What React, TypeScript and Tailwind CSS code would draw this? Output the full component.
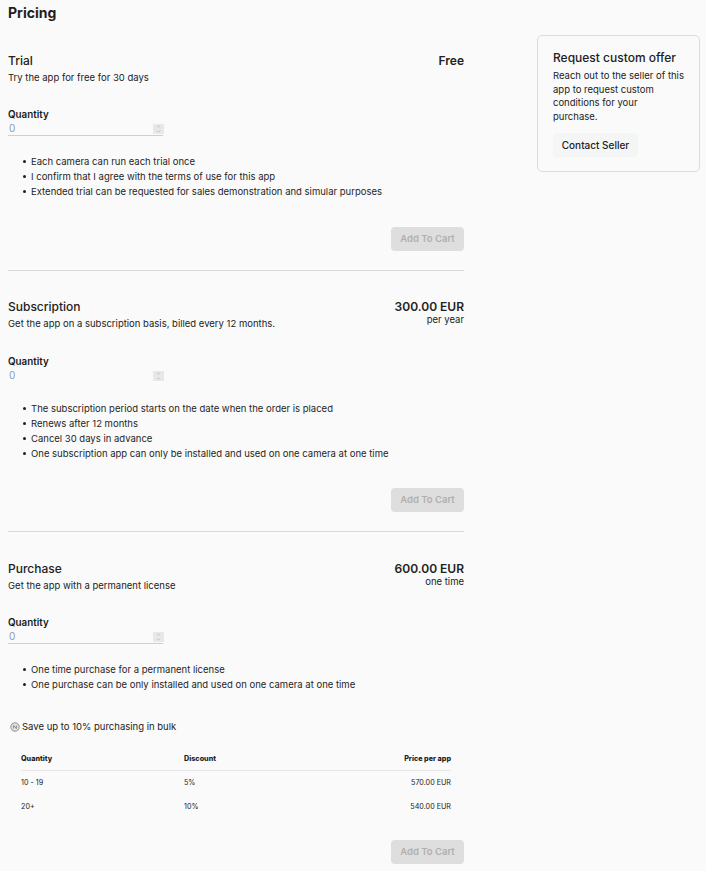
import { ChevronDown, ChevronUp } from 'lucide-react';

interface PlanProps {
  title: string;
  desc: string;
  price: string;
  per?: string;
}

function QuantityField({ noLine }: { noLine?: boolean }) {
  return (
    <div>
      <div className="text-[9.8px] leading-[14px] font-semibold text-[#1a1a1a]">Quantity</div>
      <div className={`w-[155px] h-[14px] relative ${noLine ? '' : 'border-b border-[#cfcfcf]'}`}>
        <span className="block text-[10px] leading-[13px] pl-[1px] text-[#8a9ac0]">0</span>
        <span className="absolute right-[-1px] top-[2px] w-[11px] h-[10px] bg-[#e8e8e8] flex flex-col items-center justify-center text-[#8a8a8a]">
          <ChevronUp className="w-[7px] h-[5px]" />
          <ChevronDown className="w-[7px] h-[5px]" />
        </span>
      </div>
    </div>
  );
}

function Bullets({ items }: { items: string[] }) {
  return (
    <ul className="pl-[15px] text-[9.5px] leading-[15px] text-[#1f1f1f]">
      {items.map((b) => (
        <li key={b} className="flex items-center gap-[5px]">
          <span className="w-[3px] h-[3px] rounded-full bg-[#1f1f1f] shrink-0" />
          {b}
        </li>
      ))}
    </ul>
  );
}

function PlanHead({ title, desc, price, per }: PlanProps) {
  return (
    <div className="flex justify-between">
      <div>
        <div className="text-[12px] leading-[18px] font-medium text-[#222]">{title}</div>
        <div className="text-[9.5px] leading-[15px] text-[#222]">{desc}</div>
      </div>
      <div className="text-right">
        <div className="text-[12px] leading-[18px] font-semibold text-[#222]">{price}</div>
        {per && <div className="text-[9.5px] leading-[8px] text-[#222]">{per}</div>}
      </div>
    </div>
  );
}

function AddToCart() {
  return (
    <div className="flex justify-end">
      <button className="w-[73px] h-[24px] rounded-[4px] bg-[#dedede] text-[9.5px] font-semibold text-[#b0b0b0]">
        Add To Cart
      </button>
    </div>
  );
}

export default function App() {
  return (
    <div className="min-h-[871px] bg-[#fafafa] flex font-['Inter',sans-serif] overflow-hidden">
      <div className="w-[464px] pl-[8px] pt-[5px] shrink-0">
        <h2 className="text-[14px] leading-[16px] font-bold text-[#1f1f1f]">Pricing</h2>

        {/* Trial */}
        <div className="mt-[31px]">
          <PlanHead title="Trial" desc="Try the app for free for 30 days" price="Free" />
          <div className="mt-[23px]"><QuantityField /></div>
          <div className="mt-[18px]">
            <Bullets
              items={[
                'Each camera can run each trial once',
                'I confirm that I agree with the terms of use for this app',
                'Extended trial can be requested for sales demonstration and simular purposes',
              ]}
            />
          </div>
          <div className="mt-[28px]"><AddToCart /></div>
        </div>
        <hr className="mt-[19px] border-[#d9d9d9]" />

        {/* Subscription */}
        <div className="mt-[27px]">
          <PlanHead
            title="Subscription"
            desc="Get the app on a subscription basis, billed every 12 months."
            price="300.00 EUR"
            per="per year"
          />
          <div className="mt-[24px]"><QuantityField noLine /></div>
          <div className="mt-[18px]">
            <Bullets
              items={[
                'The subscription period starts on the date when the order is placed',
                'Renews after 12 months',
                'Cancel 30 days in advance',
                'One subscription app can only be installed and used on one camera at one time',
              ]}
            />
          </div>
          <div className="mt-[27px]"><AddToCart /></div>
        </div>
        <hr className="mt-[19px] border-[#d9d9d9]" />

        {/* Purchase */}
        <div className="mt-[28px]">
          <PlanHead
            title="Purchase"
            desc="Get the app with a permanent license"
            price="600.00 EUR"
            per="one time"
          />
          <div className="mt-[23px]"><QuantityField /></div>
          <div className="mt-[18px]">
            <Bullets
              items={[
                'One time purchase for a permanent license',
                'One purchase can be only installed and used on one camera at one time',
              ]}
            />
          </div>
          <div className="mt-[27px] flex items-center gap-[2px] pl-[2px] text-[9.5px] leading-[15px] text-[#222]">
            <svg width="10" height="10" viewBox="0 0 10 10" fill="none" stroke="#777" strokeWidth="0.8">
              <circle cx="5" cy="5" r="4.2" fill="#e4e4e4" />
              <path d="M3.6 3.4 L6.4 6.6 M3.6 6.6 V3.4 M6.4 3.4 V6.6" />
            </svg>
            Save up to 10% purchasing in bulk
          </div>
          <table className="mt-[15px] ml-[13px] w-[430px] text-[7.2px] text-[#222]">
            <thead>
              <tr className="border-b border-[#e6e6e6] h-[21px] text-left">
                <th className="w-[163px] font-extrabold">Quantity</th>
                <th className="font-extrabold">Discount</th>
                <th className="font-extrabold text-right">Price per app</th>
              </tr>
            </thead>
            <tbody>
              <tr className="h-[26px]">
                <td>10 - 19</td>
                <td>5%</td>
                <td className="text-right">570.00 EUR</td>
              </tr>
              <tr className="h-[23px]">
                <td>20+</td>
                <td>10%</td>
                <td className="text-right">540.00 EUR</td>
              </tr>
            </tbody>
          </table>
          <div className="mt-[21px]"><AddToCart /></div>
        </div>
      </div>

      {/* Custom offer card */}
      <div className="ml-[73px] mt-[35px] w-[163px] h-[137px] shrink-0 rounded-[5px] border border-[#dcdcdc] pl-[15px] pt-[13px] pr-[6px]">
        <div className="text-[12px] leading-[17px] font-medium text-[#222]">Request custom offer</div>
        <p className="mt-[3px] text-[9.5px] leading-[13.5px] text-[#222]">
          Reach out to the seller of this
          <br />
          app to request custom
          <br />
          conditions for your
          <br />
          purchase.
        </p>
        <button className="mt-[10px] w-[85px] h-[24px] rounded-[4px] bg-[#f4f6f6] text-[10px] font-medium text-[#222]">
          Contact Seller
        </button>
      </div>
    </div>
  );
}
